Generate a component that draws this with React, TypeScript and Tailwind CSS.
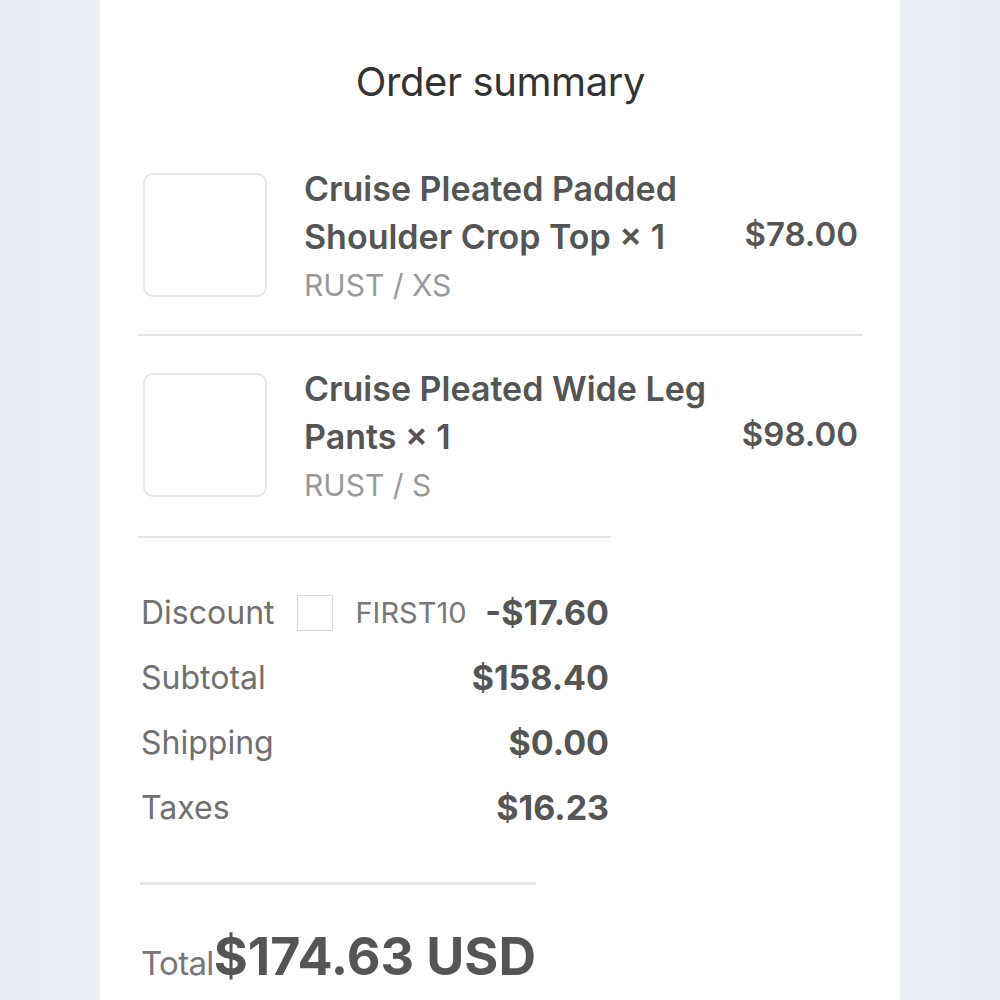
import React from "react";

const items = [
  { name: "Cruise Pleated Padded Shoulder Crop Top × 1", variant: "RUST / XS", price: "$78.00" },
  { name: "Cruise Pleated Wide Leg Pants × 1", variant: "RUST / S", price: "$98.00" },
];

const rows = [
  { label: "Subtotal", value: "$158.40" },
  { label: "Shipping", value: "$0.00" },
  { label: "Taxes", value: "$16.23" },
];

export default function App() {
  return (
    <div
      className="min-h-screen flex justify-center bg-gradient-to-r from-[#e9eef5] via-[#f3f5f9] to-[#e9eef5]"
      style={{ fontFamily: "Inter, 'Noto Sans', sans-serif" }}
    >
      <div className="w-[800px] bg-white pl-[38px] pr-[37px] pb-10">
        <h1 className="pt-[58px] text-center text-[40px] leading-[48px] text-[#333] tracking-[-0.01em]">
          Order summary
        </h1>

        <div className="mt-[54px]">
          {items.map((item, i) => (
            <div key={i}>
              {i > 0 && <div className="h-[2px] bg-[#e6e6e6] mb-[24px]" />}
              <div className={`flex items-center ${i === 0 ? "pb-[25px]" : "pb-[27px]"}`}>
                <div className="ml-[5px] w-[124px] h-[124px] shrink-0 rounded-[10px] border-2 border-[#e6e6e6]" />
                <div className="ml-[37px] flex-1 pt-[5px]">
                  <p className="w-[420px] text-[34px] leading-[48px] font-semibold text-[#555]">
                    {item.name}
                  </p>
                  <p className="text-[30px] leading-[48px] text-[#999]">{item.variant}</p>
                </div>
                <div className="text-[33px] font-semibold text-[#555] pr-[5px]">{item.price}</div>
              </div>
            </div>
          ))}
        </div>

        <div className="w-[473px]">
          <div className="h-[2px] bg-[#e6e6e6]" />
          <div className="mt-[42px] pl-[3px] pr-[2px]">
            <div className="flex items-center h-[65px]">
              <span className="text-[32px] text-[#707070]">Discount</span>
              <span className="ml-[22px] w-[36px] h-[36px] border border-[#d9d9d9]" />
              <span className="ml-[23px] text-[29px] text-[#777]">FIRST10</span>
              <span className="ml-auto text-[34px] font-bold text-[#555]">-$17.60</span>
            </div>
            {rows.map((r) => (
              <div key={r.label} className="flex items-center justify-between h-[65px]">
                <span className="text-[32px] text-[#707070]">{r.label}</span>
                <span className="text-[34px] font-bold text-[#555]">{r.value}</span>
              </div>
            ))}
          </div>
          <div className="mt-[42px] ml-[2px] w-[396px] h-[3px] bg-[#e6e6e6]" />
          <div className="mt-[46px] pl-[3px] flex items-baseline">
            <span className="text-[33px] text-[#777] tracking-[-0.02em]">Total</span>
            <span className="text-[52px] font-bold text-[#555] leading-none">$174.63 USD</span>
          </div>
        </div>
      </div>
    </div>
  );
}
